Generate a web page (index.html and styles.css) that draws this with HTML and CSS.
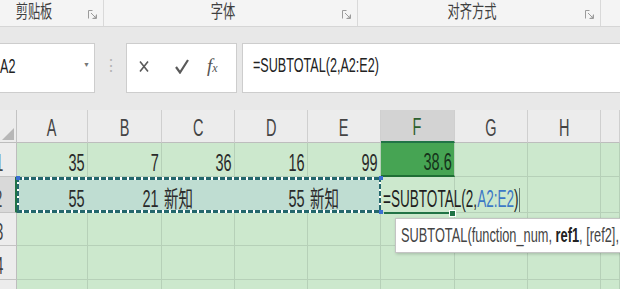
FILE: index.html
```html
<!DOCTYPE html>
<html lang="zh-CN">
<head>
  <meta charset="UTF-8" />
  <title>SUBTOTAL</title>
  <link rel="stylesheet" href="styles.css">
</head>
<body>

  <div class="ribbon">
    <div class="group first">
      <span class="lbl"><span class="sq">剪贴板</span></span>
      <svg class="launch" width="9" height="9" viewBox="0 0 9 9"><path d="M0.5 8.5V0.5h4M8.5 4.5v4h-4M3 3l5 5M8 5.5V8H5.5" fill="none" stroke="#9b9b9b"/></svg>
    </div>
    <div class="group">
      <span class="lbl"><span class="sq">字体</span></span>
      <svg class="launch" width="9" height="9" viewBox="0 0 9 9"><path d="M0.5 8.5V0.5h4M8.5 4.5v4h-4M3 3l5 5M8 5.5V8H5.5" fill="none" stroke="#9b9b9b"/></svg>
    </div>
    <div class="group wide">
      <span class="lbl"><span class="sq">对齐方式</span></span>
      <svg class="launch" width="9" height="9" viewBox="0 0 9 9"><path d="M0.5 8.5V0.5h4M8.5 4.5v4h-4M3 3l5 5M8 5.5V8H5.5" fill="none" stroke="#9b9b9b"/></svg>
    </div>
    <div class="group rest"></div>
  </div>

  <div class="fbar">
    <div class="namebox">
      <span class="sq left">A2</span>
      <span class="dd">▼</span>
    </div>
    <div class="grip">⋮</div>
    <div class="btns">
      <svg width="10" height="13" viewBox="0 0 10 13"><path d="M1 1.5l8 10M9 1.5l-8 10" stroke="#5a5a5a" stroke-width="1.6"/></svg>
      <svg width="14" height="15" viewBox="0 0 14 15"><path d="M1 8l4 5.5L13 1" fill="none" stroke="#5a5a5a" stroke-width="2.2"/></svg>
      <span class="fx">f<small>x</small></span>
    </div>
    <div class="formula"><span class="sq left">=SUBTOTAL(2,A2:E2)</span></div>
  </div>

  <div class="sheet">
    <div class="grid">
      <div class="corner"><span class="tri"></span></div>
      <div class="colh"><span class="sq">A</span></div>
      <div class="colh"><span class="sq">B</span></div>
      <div class="colh"><span class="sq">C</span></div>
      <div class="colh"><span class="sq">D</span></div>
      <div class="colh"><span class="sq">E</span></div>
      <div class="colh active"><span class="sq">F</span></div>
      <div class="colh"><span class="sq">G</span></div>
      <div class="colh"><span class="sq">H</span></div>
      <div class="colh"></div>

      <div class="rowh"><span class="sq">1</span></div>
      <div class="cell num"><span class="sq r">35</span></div>
      <div class="cell num"><span class="sq r">7</span></div>
      <div class="cell num"><span class="sq r">36</span></div>
      <div class="cell num"><span class="sq r">16</span></div>
      <div class="cell num"><span class="sq r">99</span></div>
      <div class="cell num filled"><span class="sq r">38.6</span></div>
      <div class="cell"></div>
      <div class="cell"></div>
      <div class="cell"></div>

      <div class="rowh active"><span class="sq">2</span></div>
      <div class="cell num marked"><span class="sq r">55</span></div>
      <div class="cell num marked"><span class="sq r">21</span></div>
      <div class="cell marked"><span class="sq left">新知</span></div>
      <div class="cell num marked"><span class="sq r">55</span></div>
      <div class="cell marked"><span class="sq left">新知</span></div>
      <div class="cell editing"><span class="sq left">=SUBTOTAL(2,<span class="ref">A2:E2</span>)<span class="caret"></span></span></div>
      <div class="cell"></div>
      <div class="cell"></div>
      <div class="cell"></div>

      <div class="rowh"><span class="sq">3</span></div>
      <div class="cell"></div><div class="cell"></div><div class="cell"></div><div class="cell"></div>
      <div class="cell"></div><div class="cell"></div><div class="cell"></div><div class="cell"></div><div class="cell"></div>

      <div class="rowh"><span class="sq">4</span></div>
      <div class="cell"></div><div class="cell"></div><div class="cell"></div><div class="cell"></div>
      <div class="cell"></div><div class="cell"></div><div class="cell"></div><div class="cell"></div><div class="cell"></div>

      <div class="rowh"><span class="sq">5</span></div>
      <div class="cell"></div><div class="cell"></div><div class="cell"></div><div class="cell"></div>
      <div class="cell"></div><div class="cell"></div><div class="cell"></div><div class="cell"></div><div class="cell"></div>
    </div>

    <div class="marquee"></div>
    <span class="handle h1"></span>
    <span class="handle h2"></span>
    <span class="handle h3"></span>
    <div class="editline"><span class="knob"></span></div>

    <div class="tip"><span class="sq left">SUBTOTAL(function_num, <b>ref1</b>, [ref2],</span></div>
  </div>

</body>
</html>
```

FILE: styles.css
```css
body {
  margin: 0;
  width: 620px;
  height: 289px;
  overflow: hidden;
  background: #e8e8e8;
  font-family: 'Liberation Sans', Arial, 'Noto Sans CJK SC', sans-serif;
  color: #333;
}

/* squeezed text, the capture is narrower than it is tall */
.sq {
  display: inline-block;
  white-space: nowrap;
  transform: scaleX(0.63);
  transform-origin: center;
}
.sq.left { transform-origin: left center; }
.sq.r { transform-origin: right center; }

/* ribbon group labels */
.ribbon {
  display: flex;
  height: 27px;
  background: #f4f4f4;
  border-bottom: 1px solid #d6d6d6;
  box-sizing: border-box;
}
.group {
  display: flex;
  align-items: center;
  width: 254px;
  border-right: 1px solid #d9d9d9;
  box-sizing: border-box;
  padding-right: 6px;
}
.group.first {
  width: 108px;
  margin-left: -4px;
}
.group.wide { width: 243px; }
.group.rest { flex: 1; border-right: none; }
.lbl {
  flex: 1;
  text-align: center;
  font-size: 18px;
  color: #3f3f3f;
  margin-top: -7px;
}
.group.first .lbl { padding-right: 16px; }
.lbl .sq { transform: scaleX(0.68); }
.launch { margin-top: 2px; }

/* formula bar */
.fbar {
  display: flex;
  height: 50px;
  padding: 16px 0 17px;
}
.namebox {
  width: 103px;
  margin-left: -8px;
  padding-left: 8px;
  padding-bottom: 4px;
  background: #fff;
  border: 1px solid #cdcdcd;
  border-left: none;
  box-sizing: border-box;
  display: flex;
  align-items: center;
  font-size: 20px;
  color: #222;
  position: relative;
}
.namebox .dd {
  position: absolute;
  left: 91px;
  top: 17px;
  font-size: 7px;
  color: #777;
}
.grip {
  width: 31px;
  text-align: center;
  color: #b5b5b5;
  font-size: 16px;
  line-height: 46px;
}
.btns {
  width: 111px;
  background: #fff;
  border: 1px solid #cdcdcd;
  box-sizing: border-box;
  display: flex;
  align-items: center;
  gap: 26px;
  padding-left: 12px;
  padding-bottom: 4px;
}
.fx {
  font-family: 'Liberation Serif', serif;
  font-style: italic;
  font-size: 19px;
  color: #555;
  margin-left: -8px;
}
.fx small { font-size: 12px; }
.formula {
  flex: 1;
  margin-left: 5px;
  background: #fff;
  border: 1px solid #cdcdcd;
  border-right: none;
  display: flex;
  align-items: center;
  padding-left: 10px;
  padding-bottom: 6px;
  font-size: 20px;
  color: #222;
}

/* sheet */
.sheet {
  position: relative;
}
.grid {
  display: grid;
  grid-template-columns: 17px 71px 74px 73px 73px 73px 74px 73px 73px 1fr;
  grid-template-rows: 33px 34px 36px 33px 34px 34px;
  font-size: 23px;
}
.corner, .colh, .rowh {
  background: #ececec;
  box-sizing: border-box;
  color: #444;
}
.corner {
  border-right: 1px solid #c3c3c3;
  border-bottom: 1px solid #bdbdbd;
  position: relative;
}
.tri {
  position: absolute;
  right: 2px;
  bottom: 2px;
  border-left: 12px solid transparent;
  border-bottom: 12px solid #b7b7b7;
}
.colh {
  border-right: 1px solid #cfcfcf;
  border-bottom: 1px solid #bdbdbd;
  display: flex;
  justify-content: center;
  align-items: flex-end;
  line-height: 28px;
}
.colh.active {
  background: #d3d3d3;
  border-bottom: 2px solid #217346;
  color: #2c5f2f;
}
.rowh {
  border-right: 1px solid #bdbdbd;
  border-bottom: 1px solid #c3c3c3;
  display: flex;
  justify-content: flex-end;
  align-items: flex-end;
  line-height: 26px;
  padding-right: 10px;
  overflow: hidden;
}
.rowh.active {
  background: #d9d9d9;
  border-right: 2px solid #217346;
}
.cell {
  background: #cce8cd;
  border-right: 1px solid #b6d0b8;
  border-bottom: 1px solid #b6d0b8;
  box-sizing: border-box;
  display: flex;
  align-items: flex-end;
  line-height: 25px;
  padding: 0 2px;
  color: #2a2a2a;
  white-space: nowrap;
}
.cell.num { justify-content: flex-end; }
.cell.marked { background: #bfddd2; border-right-color: #bfddd2; }
.cell.filled {
  background: #46a453;
  border-bottom: 2px solid #1f6e35;
  color: #15331a;
}
.cell.editing {
  color: #1f1f1f;
  overflow: visible;
}
.cell.editing .sq { transform: scaleX(0.59); }
.ref { color: #3c78c6; }
.caret {
  display: inline-block;
  width: 1px;
  height: 24px;
  margin-left: 1px;
  vertical-align: -5px;
  background: #222;
}

/* copy marquee round A2:E2 */
.marquee {
  position: absolute;
  left: 17px;
  top: 67px;
  width: 364px;
  height: 36px;
  background:
    repeating-linear-gradient(90deg, #24676c 0 5px, #fff 5px 7px) top / 100% 3px no-repeat,
    repeating-linear-gradient(90deg, #24676c 0 5px, #fff 5px 7px) bottom / 100% 3px no-repeat,
    repeating-linear-gradient(180deg, #24676c 0 5px, #fff 5px 7px) left / 2px 100% no-repeat,
    repeating-linear-gradient(180deg, #24676c 0 5px, #fff 5px 7px) right / 2px 100% no-repeat;
}
.handle {
  position: absolute;
  width: 4px;
  height: 4px;
  background: #3a6fd0;
}
.h1 { left: 379px; top: 66px; }
.h2 { left: 379px; top: 100px; }
.h3 { left: 16px; top: 66px; }
.editline {
  position: absolute;
  left: 384px;
  top: 102px;
  width: 69px;
  height: 2px;
  background: #217346;
}
.knob {
  position: absolute;
  right: -3px;
  top: -2px;
  width: 5px;
  height: 5px;
  background: #217346;
  border: 1px solid #fff;
}

/* function hint */
.tip {
  position: absolute;
  left: 395px;
  top: 108px;
  width: 240px;
  height: 35px;
  background: #fff;
  border: 1px solid #c4c4c4;
  box-shadow: 1px 1px 3px rgba(0,0,0,0.2);
  box-sizing: border-box;
  padding-left: 5px;
  font-size: 20px;
  line-height: 33px;
  color: #444;
}
.tip .sq { transform: scaleX(0.64); }
.tip b { color: #222; }
```
